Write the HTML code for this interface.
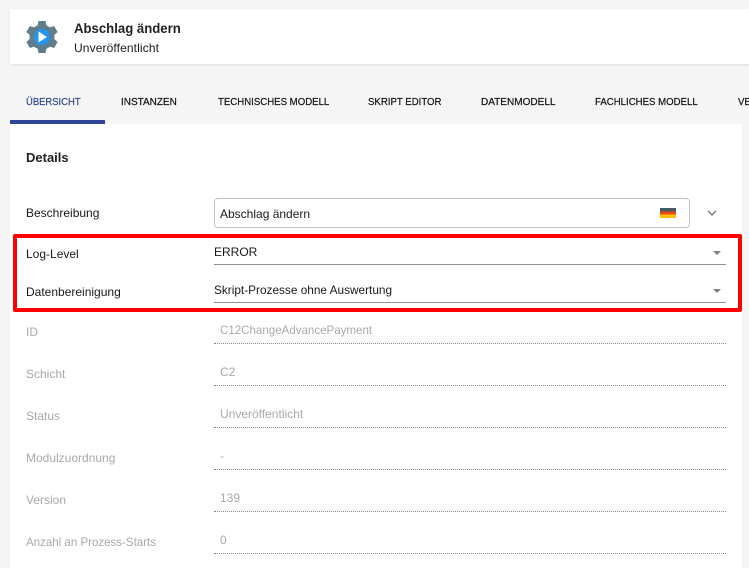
<!DOCTYPE html>
<html><head><meta charset="utf-8">
<style>
html,body{margin:0;padding:0}
body{width:749px;height:568px;overflow:hidden;background:#f5f5f5;position:relative;font-family:"Liberation Sans",sans-serif;color:#1a1a1a}
.a{position:absolute;white-space:nowrap;line-height:16px}
.l{font-size:12px;left:26px}
.v{font-size:12px;left:220px}
.g{color:#a8a8a8}
.t{font-size:10.5px;top:94px;color:#111;transform:scaleX(.917);transform-origin:0 0;-webkit-text-stroke:.2px #111}
.ln{position:absolute;left:214px;width:512px;height:0;border-bottom:1px solid #8f8f8f}
.d{position:absolute;left:214px;width:512px;height:0;border-bottom:1px dotted #8a8a8a}
.c{position:absolute;left:713px;width:0;height:0;border-left:4px solid transparent;border-right:4px solid transparent;border-top:4px solid #808080}
</style></head><body>
<div class="a" style="left:10px;top:9px;width:739px;height:55px;background:#fff;box-shadow:0 1px 2px rgba(0,0,0,.1)"></div>
<svg class="a" style="left:26px;top:21px" width="32" height="32" viewBox="0 0 32 32">
<g fill="#607d8b">
<circle cx="16" cy="16" r="12.5"/>
<path d="M12.500 0h7l1.200 6h-9.400z"/>
<path d="M12.500 0h7l1.200 6h-9.400z" transform="rotate(60 16 16)"/>
<path d="M12.500 0h7l1.200 6h-9.400z" transform="rotate(120 16 16)"/>
<path d="M12.500 0h7l1.200 6h-9.400z" transform="rotate(180 16 16)"/>
<path d="M12.500 0h7l1.200 6h-9.400z" transform="rotate(240 16 16)"/>
<path d="M12.500 0h7l1.200 6h-9.400z" transform="rotate(300 16 16)"/>
</g>
<circle cx="16" cy="16" r="8" fill="#2196f3"/><path fill="#fff" d="M12.500 10.500v11l8.500-5.500z"/>
</svg>
<div class="a" style="left:74px;top:20px;font-size:14px;font-weight:bold;color:#222;transform:scaleX(.94);transform-origin:0 0">Abschlag ändern</div>
<div class="a" style="left:74px;top:40px;font-size:12px;letter-spacing:.12px">Unveröffentlicht</div>

<div class="a t" style="left:26px;color:#33478f;-webkit-text-stroke:.2px #33478f;transform:scaleX(.9)">ÜBERSICHT</div>
<div class="a t" style="left:121px;transform:scaleX(.95)">INSTANZEN</div>
<div class="a t" style="left:218px">TECHNISCHES MODELL</div>
<div class="a t" style="left:368px">SKRIPT EDITOR</div>
<div class="a t" style="left:481px;transform:scaleX(.955)">DATENMODELL</div>
<div class="a t" style="left:595px">FACHLICHES MODELL</div>
<div class="a t" style="left:738px">VE</div>
<div class="a" style="left:10px;top:120px;width:95px;height:4px;background:#2f4596"></div>

<div class="a" style="left:10px;top:124px;width:732px;height:444px;background:#fff"></div>
<div class="a" style="left:26px;top:150px;font-size:13px;font-weight:bold;color:#222">Details</div>

<div class="a l" style="top:205px">Beschreibung</div>
<div class="a" style="left:214px;top:198px;width:474px;height:28px;border:1px solid #c4c4c4;border-radius:4px;background:#fff"></div>
<div class="a v" style="top:206px">Abschlag ändern</div>
<div class="a" style="left:660px;top:208px;width:16px;height:10px;background:linear-gradient(#455a64 0 33%,#e64a19 33% 66%,#ffc107 66%)"></div>
<svg class="a" style="left:707px;top:210px" width="10" height="7" viewBox="0 0 10 7"><path d="M1 1l4 4 4-4" fill="none" stroke="#808080" stroke-width="1.500"/></svg>

<div class="a" style="left:13px;top:234px;width:721px;height:70px;border:4px solid #f00;border-radius:2px"></div>

<div class="a l" style="top:246px">Log-Level</div>
<div class="a v" style="top:244px;left:214px">ERROR</div>
<div class="ln" style="top:264px"></div>
<div class="c" style="top:251px"></div>
<div class="a l" style="top:284px">Datenbereinigung</div>
<div class="a v" style="top:282px;left:214px;transform:scaleX(.985);transform-origin:0 0">Skript-Prozesse ohne Auswertung</div>
<div class="ln" style="top:302px"></div>
<div class="c" style="top:289px"></div>

<div class="a l g" style="top:324px">ID</div>
<div class="a v g" style="top:322px;transform:scaleX(.962);transform-origin:0 0">C12ChangeAdvancePayment</div>
<div class="d" style="top:343px"></div>
<div class="a l g" style="top:366px">Schicht</div>
<div class="a v g" style="top:364px">C2</div>
<div class="d" style="top:385px"></div>
<div class="a l g" style="top:408px">Status</div>
<div class="a v g" style="top:406px">Unveröffentlicht</div>
<div class="d" style="top:427px"></div>
<div class="a l g" style="top:450px">Modulzuordnung</div>
<div class="a v g" style="top:448px">-</div>
<div class="d" style="top:469px"></div>
<div class="a l g" style="top:492px">Version</div>
<div class="a v g" style="top:490px">139</div>
<div class="d" style="top:511px"></div>
<div class="a l g" style="top:534px;transform:scaleX(.96);transform-origin:0 0">Anzahl an Prozess-Starts</div>
<div class="a v g" style="top:532px">0</div>
<div class="d" style="top:553px"></div>
</body></html>
